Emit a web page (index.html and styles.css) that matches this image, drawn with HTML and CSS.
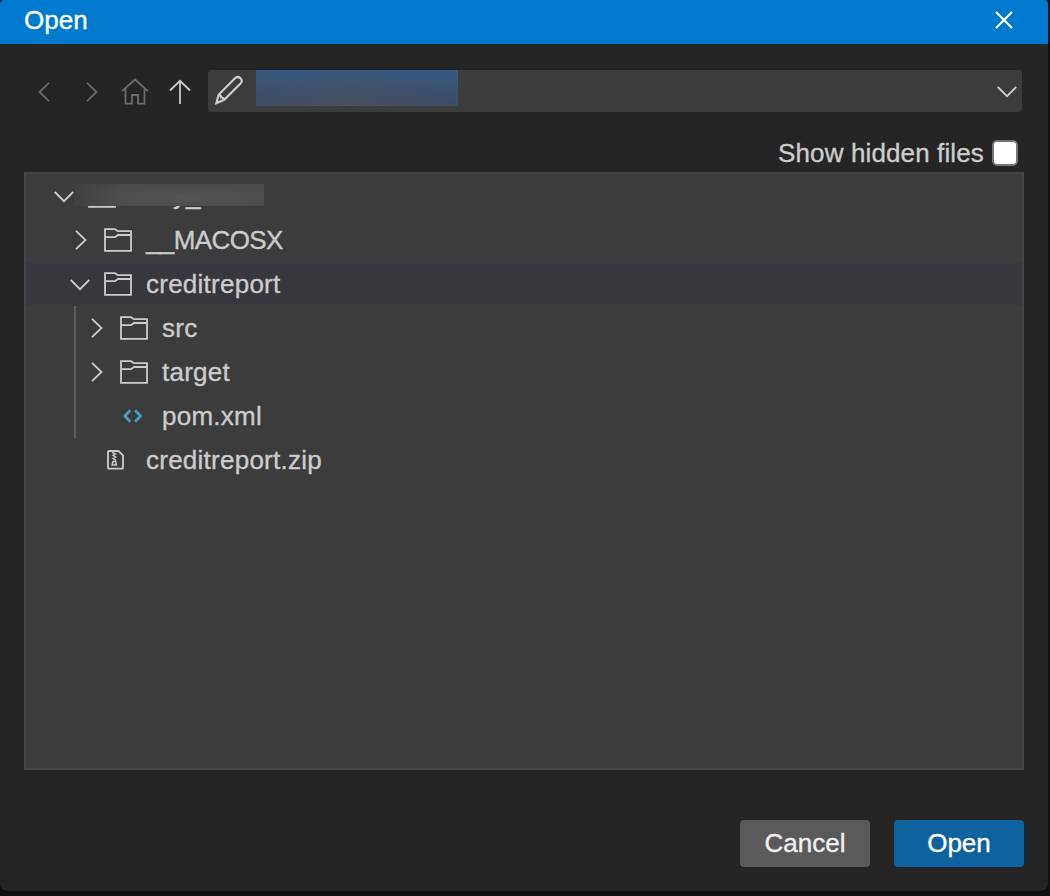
FILE: index.html
```html
<!DOCTYPE html>
<html lang="en">
<head>
<meta charset="utf-8">
<title>Open</title>
<link rel="stylesheet" href="styles.css">
</head>
<body>
<svg class="defs" width="0" height="0" aria-hidden="true">
  <symbol id="folder" viewBox="0 0 28 24"><path d="M1 22.9V1.2H11L14 3.2H27V22.9ZM1 9.2H11L14 7H27"/></symbol>
  <symbol id="right" viewBox="0 0 12 20"><path d="M1 .8L10.5 10L1 19.2"/></symbol>
  <symbol id="down" viewBox="0 0 20 12"><path d="M.8 1L10 10.2L19.2 1"/></symbol>
</svg>
<main class="dialog">
  <header class="titlebar">
    <h1 class="title">Open</h1>
    <svg class="close" width="18" height="18" viewBox="0 0 18 18"><path d="M1 1L17 17M17 1L1 17"/></svg>
  </header>
  <nav class="nav">
    <svg class="icon dim back" width="12" height="20" viewBox="0 0 12 20"><path d="M11 .8L1.5 10L11 19.2"/></svg>
    <svg class="icon dim forward" width="12" height="20"><use href="#right"/></svg>
    <svg class="icon dim home" width="28" height="28" viewBox="0 0 28 28"><path d="M1 13.2L14 1.5L27 13.2M4.5 10.5V25.7H11V17H17V25.7H23.5V10.5"/></svg>
    <svg class="icon up" width="22" height="26" viewBox="0 0 22 26"><path d="M11 25V2M1 11.5L11 1.8L21 11.5"/></svg>
    <div class="location">
      <svg class="icon pencil" width="28" height="30" viewBox="0 0 28 30"><path d="M1.4 28L3.6 19.8L20 3.3Q22.5 .8 25.3 3.2Q28.2 5.7 25.5 8.6L9.2 24.7ZM3.6 19.8Q6 20 6.2 22.5Q8.7 22.4 9.2 24.7"/></svg>
      <span class="path-mask"></span>
      <svg class="icon" width="20" height="12"><use href="#down"/></svg>
    </div>
  </nav>
  <label class="hidden-files">Show hidden files<input class="check" type="checkbox"></label>
  <section class="tree">
    <div class="row root">
      <svg class="icon down" width="20" height="12"><use href="#down"/></svg>
      <svg class="icon folder" width="28" height="24"><use href="#folder"/></svg>
      <span class="root-name">y_</span>
      <span class="name-mask"></span>
    </div>
    <div class="row level-1">
      <svg class="icon right" width="12" height="20"><use href="#right"/></svg>
      <svg class="icon folder" width="28" height="24"><use href="#folder"/></svg>
      <span class="name macos">__MACOSX</span>
    </div>
    <div class="row level-1 selected">
      <svg class="icon down" width="20" height="12"><use href="#down"/></svg>
      <svg class="icon folder" width="28" height="24"><use href="#folder"/></svg>
      <span class="name">creditreport</span>
    </div>
    <div class="children">
      <div class="row">
        <svg class="icon right" width="12" height="20"><use href="#right"/></svg>
        <svg class="icon folder" width="28" height="24"><use href="#folder"/></svg>
        <span class="name">src</span>
      </div>
      <div class="row">
        <svg class="icon right" width="12" height="20"><use href="#right"/></svg>
        <svg class="icon folder" width="28" height="24"><use href="#folder"/></svg>
        <span class="name">target</span>
      </div>
      <div class="row">
        <svg class="xml" width="20" height="14" viewBox="0 0 20 14"><path d="M7.3 1.2L2 7L7.3 12.8M12.2 1.2L17.5 7L12.2 12.8"/></svg>
        <span class="name">pom.xml</span>
      </div>
    </div>
    <div class="row level-1">
      <svg class="zip" width="17" height="20" viewBox="0 0 17 20"><path d="M1 2Q1 1 2 1H11.5L16 5.3V17.7Q16 18.7 15 18.7H2Q1 18.7 1 17.7Z"/><path class="zipper" d="M5.2 2.5L8.5 4L6 5.5L8.7 7L6 8.5L8.5 10V11.4"/><path class="pull" d="M6 11.4H8.6L9.4 15H5.2Z"/></svg>
      <span class="name">creditreport.zip</span>
    </div>
  </section>
  <footer class="actions">
    <button class="button cancel">Cancel</button>
    <button class="button primary">Open</button>
  </footer>
</main>
</body>
</html>
```
FILE: styles.css
```css
* { box-sizing: border-box; }
body { margin: 0; height: 896px; background: #111; overflow: hidden; font: 26px/44px "Liberation Sans", Arial, sans-serif; color: #ccc; -webkit-text-stroke: .35px currentColor; }
.defs { position: absolute; }
svg { display: block; flex: none; fill: none; overflow: visible; }
.dialog { width: 1048px; height: 891px; background: #252525; border-radius: 4px 4px 8px 8px; overflow: hidden; }
.titlebar { display: flex; justify-content: space-between; height: 44px; padding: 0 35px 0 24px; background: #007acf; color: #fff; }
.title { margin: 0; font-size: 26px; font-weight: 400; line-height: 40px; }
.close { margin-top: 11px; stroke: #fff; stroke-width: 2; }
.icon { stroke: #ccc; stroke-width: 1.8; }
.dim { stroke: #6b6b6b; }
.nav { display: flex; align-items: center; height: 42px; margin: 26px 26px 0 38px; }
.forward { margin-left: 36px; }
.home { margin-left: 23px; }
.up { margin-left: 20px; }
.nav .icon { transform: translateY(1px); }
.location { display: flex; flex: 1; align-items: center; height: 42px; margin-left: 17px; padding: 0 5px 0 7px; background: #3c3c3c; border-radius: 4px; }
.location .pencil { transform: translateY(-1px); stroke-width: 2.2; }
.path-mask { width: 202px; height: 36px; margin: 0 auto 6px 13px; background: radial-gradient(ellipse at 45% 115%, #4c5060 0%, transparent 75%), linear-gradient(#385982, #3d4c62); }
.hidden-files { display: flex; align-items: center; justify-content: flex-end; height: 60px; padding: 22px 30px 0 0; letter-spacing: .13px; }
.check { appearance: none; width: 26px; height: 26px; margin: 0 0 0 8px; background: #fff; border: 2px solid #767676; border-radius: 5px; }
.tree { width: 1000px; height: 598px; margin-left: 24px; border: 2px solid #454545; background: #3c3c3c; }
.row { position: relative; display: flex; align-items: center; height: 44px; }
.row .down { transform: translateY(1px); }
.root { padding-left: 28px; }
.root .folder { margin-left: 14px; }
.root-name { margin-left: 43px; padding-bottom: 2px; }
.name-mask { position: absolute; left: 48px; top: 10px; width: 190px; height: 22px; background: linear-gradient(90deg, #404040, transparent 25%), radial-gradient(ellipse at 60% 60%, #545454, #4b4b4b 80%, #484848); }
.level-1 { padding-left: 49px; }
.right { margin-right: 17px; }
.folder { margin-right: 14px; }
.level-1 .down { margin: 0 14px 0 -5px; }
.name { letter-spacing: .25px; }
.macos { letter-spacing: -.6px; }
.selected { background: #37373d; }
.children { margin-left: 48px; border-left: 2px solid #5b5b5b; }
.children .row { padding-left: 15px; }
.xml { margin: 0 19px 1px 32px; stroke: #519aba; stroke-width: 2.8; }
.zip { margin: 0 22px 1px 32px; stroke: #ccc; stroke-width: 1.8; }
.zipper { stroke-width: 1.4; }
.pull { stroke-width: 1.5; }
.actions { display: flex; justify-content: flex-end; gap: 24px; padding: 50px 24px 0 0; }
.button { width: 130px; height: 47px; padding: 0; border: 0; border-radius: 4px; font: inherit; line-height: 45px; color: #fff; }
.cancel { background: #5a5a5a; color: #f0f0f0; }
.primary { background: #0e639f; }
```
